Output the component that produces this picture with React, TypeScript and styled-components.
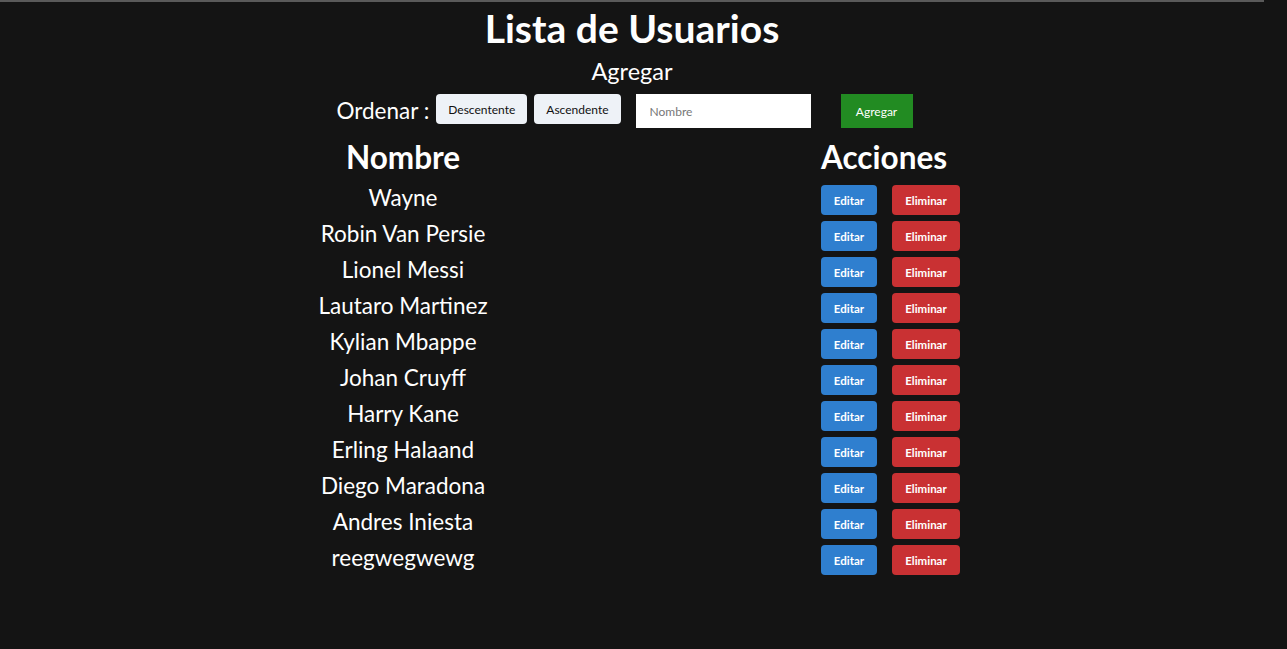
import React, { useState } from "react"
import styled, { createGlobalStyle } from "styled-components"

const GlobalStyle = createGlobalStyle`
  html, body {
    margin: 0;
    padding: 0;
    background: #141414;
  }
  body {
    font-family: Lato, "Noto Sans", sans-serif;
    color: #fff;
  }
`

const Page = styled.main`
  width: 1264px;
  min-height: 647px;
  border-top: 2px solid #5a5a5a;
  display: flex;
  flex-direction: column;
  align-items: center;
`

const Title = styled.h1`
  margin: 4px 0 0;
  font-size: 39px;
  font-weight: 700;
  line-height: 44px;
`

const SubTitle = styled.h2`
  margin: 7px 0 0;
  font-size: 23.5px;
  font-weight: 400;
  line-height: 28px;
`

const Controls = styled.div`
  display: flex;
  align-items: flex-start;
  margin-top: 9px;
  padding-right: 15px;
`

const Label = styled.span`
  font-size: 22.5px;
  line-height: 30px;
  margin-top: 2px;
  margin-right: 7px;
`

const SortButton = styled.button`
  height: 30px;
  padding: 0 12px;
  margin-right: 7px;
  border: none;
  border-radius: 4px;
  background: #eef2f7;
  color: #111;
  font-family: inherit;
  font-size: 12px;
`

const NameInput = styled.input`
  width: 175px;
  height: 34px;
  box-sizing: border-box;
  margin-left: 8px;
  border: none;
  padding: 0 14px;
  font-family: inherit;
  font-size: 12px;
  color: #222;
  background: #fff;
  outline: none;
  &::placeholder {
    color: #777;
  }
`

const AddButton = styled.button`
  height: 34px;
  width: 72px;
  margin-left: 30px;
  border: none;
  background: #228b22;
  color: #fff;
  font-family: inherit;
  font-size: 12px;
`

const Table = styled.div`
  width: 664px;
  display: grid;
  grid-template-columns: 206px 143px;
  column-gap: 315px;
  margin-top: 11px;
`

const HeadCell = styled.div<{ $align: "center" | "left" }>`
  font-size: 31.5px;
  font-weight: 700;
  line-height: 36px;
  text-align: ${({ $align }) => $align};
  margin-bottom: 7px;
  white-space: nowrap;
`

const NameCell = styled.div`
  height: 36px;
  box-sizing: border-box;
  padding-bottom: 5px;
  display: flex;
  align-items: center;
  justify-content: center;
  font-size: 22.5px;
  white-space: nowrap;
`

const ActionCell = styled.div`
  height: 36px;
  display: flex;
  align-items: center;
  gap: 15px;
`

const ActionButton = styled.button<{ $kind: "edit" | "delete" }>`
  height: 30px;
  width: ${({ $kind }) => ($kind === "edit" ? "56px" : "68px")};
  padding: 0;
  border: none;
  border-radius: 4px;
  background: ${({ $kind }) => ($kind === "edit" ? "#2f7fcf" : "#c93133")};
  color: #fff;
  font-family: inherit;
  font-size: 11.5px;
  font-weight: 700;
`

const initialUsers = [
  "Wayne",
  "Robin Van Persie",
  "Lionel Messi",
  "Lautaro Martinez",
  "Kylian Mbappe",
  "Johan Cruyff",
  "Harry Kane",
  "Erling Halaand",
  "Diego Maradona",
  "Andres Iniesta",
  "reegwegwewg",
]

export default function App() {
  const [users, setUsers] = useState(initialUsers)
  const [name, setName] = useState("")

  return (
    <>
      <GlobalStyle />
      <Page>
        <Title>Lista de Usuarios</Title>
        <SubTitle>Agregar</SubTitle>
        <Controls>
          <Label>Ordenar :</Label>
          <SortButton onClick={() => setUsers([...users].sort().reverse())}>
            Descentente
          </SortButton>
          <SortButton onClick={() => setUsers([...users].sort())}>
            Ascendente
          </SortButton>
          <NameInput
            placeholder="Nombre"
            value={name}
            onChange={e => setName(e.target.value)}
          />
          <AddButton
            onClick={() => {
              if (name) setUsers([...users, name])
              setName("")
            }}
          >
            Agregar
          </AddButton>
        </Controls>
        <Table>
          <HeadCell $align="center">Nombre</HeadCell>
          <HeadCell $align="left">Acciones</HeadCell>
          {users.map((u, i) => (
            <React.Fragment key={i}>
              <NameCell>{u}</NameCell>
              <ActionCell>
                <ActionButton $kind="edit">Editar</ActionButton>
                <ActionButton
                  $kind="delete"
                  onClick={() => setUsers(users.filter((_, j) => j !== i))}
                >
                  Eliminar
                </ActionButton>
              </ActionCell>
            </React.Fragment>
          ))}
        </Table>
      </Page>
    </>
  )
}
